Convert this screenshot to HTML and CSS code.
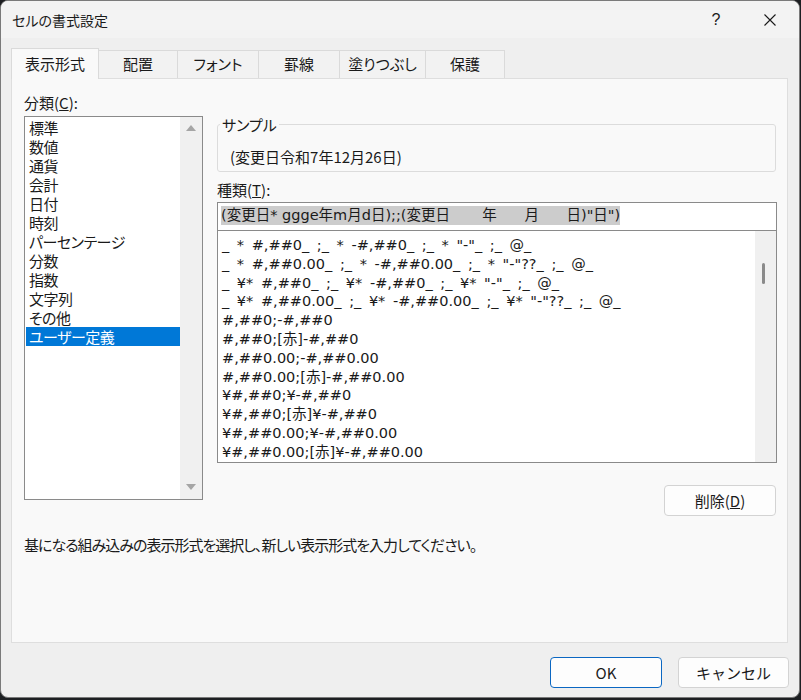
FILE: index.html
```html
<!DOCTYPE html>
<html lang="ja">
<head>
  <meta charset="UTF-8" />
  <title>セルの書式設定</title>
  <link rel="stylesheet" href="styles.css">
</head>
<body>
  <div class="dialog">
    <div class="titlebar">
      <span class="title">セルの書式設定</span>
      <span class="help">?</span>
      <span class="close">
        <svg width="12" height="12" viewBox="0 0 12 12"><path d="M0.5 0.5 L11.5 11.5 M11.5 0.5 L0.5 11.5" stroke="#1a1a1a" stroke-width="1.1" fill="none"/></svg>
      </span>
    </div>

    <div class="tabs">
      <div class="tab active">表示形式</div>
      <div class="tab">配置</div>
      <div class="tab">フォント</div>
      <div class="tab">罫線</div>
      <div class="tab">塗りつぶし</div>
      <div class="tab">保護</div>
    </div>

    <div class="panel">
      <div class="columns">
        <div class="category">
          <div class="label">分類(<u>C</u>):</div>
          <div class="listbox">
            <ul class="items">
              <li>標準</li>
              <li>数値</li>
              <li>通貨</li>
              <li>会計</li>
              <li>日付</li>
              <li>時刻</li>
              <li>パーセンテージ</li>
              <li>分数</li>
              <li>指数</li>
              <li>文字列</li>
              <li>その他</li>
              <li class="selected">ユーザー定義</li>
            </ul>
            <div class="scrollbar">
              <svg width="10" height="6" viewBox="0 0 10 6"><path d="M0 6 L5 0 L10 6 Z" fill="#a5a5a5"/></svg>
              <svg width="10" height="6" viewBox="0 0 10 6"><path d="M0 0 L10 0 L5 6 Z" fill="#a5a5a5"/></svg>
            </div>
          </div>
        </div>

        <div class="format">
          <fieldset class="sample">
            <legend>サンプル</legend>
            <div class="sample-text">(変更日令和7年12月26日)</div>
          </fieldset>

          <div class="label kind">種類(<u>T</u>):</div>
          <div class="code-input"><span class="sel">(変更日* ggge年m月d日);;(変更日       年      月      日)"日")</span></div>

          <div class="code-list">
            <ul class="codes">
              <li>_ * #,##0_ ;_ * -#,##0_ ;_ * "-"_ ;_ @_</li>
              <li>_ * #,##0.00_ ;_ * -#,##0.00_ ;_ * "-"??_ ;_ @_</li>
              <li>_ ¥* #,##0_ ;_ ¥* -#,##0_ ;_ ¥* "-"_ ;_ @_</li>
              <li>_ ¥* #,##0.00_ ;_ ¥* -#,##0.00_ ;_ ¥* "-"??_ ;_ @_</li>
              <li>#,##0;-#,##0</li>
              <li>#,##0;[赤]-#,##0</li>
              <li>#,##0.00;-#,##0.00</li>
              <li>#,##0.00;[赤]-#,##0.00</li>
              <li>¥#,##0;¥-#,##0</li>
              <li>¥#,##0;[赤]¥-#,##0</li>
              <li>¥#,##0.00;¥-#,##0.00</li>
              <li>¥#,##0.00;[赤]¥-#,##0.00</li>
            </ul>
            <div class="thin-scroll"><span class="thumb"></span></div>
          </div>

          <button class="btn delete">削除(<u>D</u>)</button>
        </div>
      </div>

      <p class="hint">基になる組み込みの表示形式を選択し、新しい表示形式を入力してください。</p>
    </div>

    <div class="footer">
      <button class="btn primary">OK</button>
      <button class="btn cancel">キャンセル</button>
    </div>
  </div>
</body>
</html>
```

FILE: styles.css
```css
body {
  margin: 0;
  background: #1d1f22;
  font-family: "Noto Sans CJK JP", "Noto Sans", sans-serif;
  font-feature-settings: "palt";
  font-size: 15px;
  color: #1a1a1a;
}
.dialog {
  width: 800px;
  height: 698px;
  box-sizing: border-box;
  border: 1px solid #7a7a7a;
  border-radius: 8px;
  background: #efefef;
  display: flex;
  flex-direction: column;
  overflow: hidden;
}
.titlebar {
  height: 37px;
  flex: none;
  display: flex;
  align-items: center;
  background: #f3f3f3;
  padding-left: 11px;
}
.title {
  font-size: 14px;
  flex: 1;
}
.help {
  width: 20px;
  text-align: center;
  font-family: "Liberation Sans", sans-serif;
  font-size: 16px;
  margin-right: 38px;
}
.close {
  display: flex;
  width: 12px;
  margin-right: 23px;
}

/* tabs */
.tabs {
  height: 40px;
  flex: none;
  display: flex;
  align-items: flex-end;
  padding-left: 10px;
}
.tab {
  height: 28px;
  box-sizing: border-box;
  border: 1px solid #dadada;
  border-bottom: none;
  margin-right: -1px;
  background: #f2f2f2;
  display: flex;
  align-items: center;
  justify-content: center;
  font-size: 15px;
  padding-bottom: 2px;
}
.tab:nth-child(1) { width: 88px; }
.tab:nth-child(2) { width: 80px; }
.tab:nth-child(3) { width: 82px; }
.tab:nth-child(4) { width: 82px; }
.tab:nth-child(5) { width: 87px; }
.tab:nth-child(6) { width: 80px; }
.tab.active {
  height: 31px;
  margin-bottom: -1px;
  background: #f9f9f9;
  position: relative;
  z-index: 1;
}

/* panel */
.panel {
  height: 565px;
  flex: none;
  box-sizing: border-box;
  margin: 0 11px 0 10px;
  border: 1px solid #dedede;
  background: #f9f9f9;
  padding: 14px 10px 0 12px;
}
.columns {
  display: grid;
  grid-template-columns: 179px 560px;
  column-gap: 14px;
}
.label {
  line-height: 19px;
  height: 19px;
}
.listbox {
  margin-top: 4px;
  height: 384px;
  box-sizing: border-box;
  border: 1px solid #8a8a8a;
  background: #fff;
  display: flex;
}
.items {
  list-style: none;
  margin: 0;
  padding: 1px 0 0 1px;
  flex: 1;
}
.items li {
  height: 19px;
  line-height: 19px;
  padding-left: 3px;
  letter-spacing: -0.5px;
}
.items li.selected {
  background: #0078d7;
  color: #fff;
}
.scrollbar {
  width: 22px;
  flex: none;
  background: #f0f0f0;
  display: flex;
  flex-direction: column;
  justify-content: space-between;
  align-items: center;
  padding: 8px 0 9px;
  box-sizing: border-box;
}

/* right column */
.format {
  display: flex;
  flex-direction: column;
}
.sample {
  margin: 23px 0 0;
  padding: 0 0 5px 2px;
  border: 1px solid #dcdcdc;
  border-radius: 3px;
  width: 559px;
  box-sizing: border-box;
}
.sample legend {
  padding: 0 2px;
  line-height: 17px;
  font-size: 15px;
}
.sample-text {
  margin-top: 14px;
  padding-left: 10px;
  line-height: 19px;
}
.kind {
  margin-top: 8px;
}
.code-input {
  margin-top: 3px;
  height: 29px;
  box-sizing: border-box;
  border: 1px solid #8a8a8a;
  background: #fff;
  padding: 3px 0 0 3px;
  white-space: pre;
  font-family: "DejaVu Sans", "Noto Sans CJK JP", sans-serif;
  font-feature-settings: normal;
  font-size: 14.5px;
}
.sel {
  background: #cccccc;
  line-height: 19px;
  display: inline-block;
}
.code-list {
  margin-top: -1px;
  height: 233px;
  box-sizing: border-box;
  border: 1px solid #8a8a8a;
  background: #fff;
  display: flex;
  overflow: hidden;
}
.codes {
  list-style: none;
  margin: 0;
  padding: 5px 0 0 4px;
  flex: 1;
  font-family: "DejaVu Sans", "Noto Sans CJK JP", sans-serif;
  font-feature-settings: normal;
  font-size: 14.5px;
}
.codes li {
  height: 18.8px;
  line-height: 18.8px;
  white-space: pre;
  word-spacing: 3px;
}
.thin-scroll {
  width: 21px;
  flex: none;
  background: #f0f0f0;
  position: relative;
}
.thumb {
  position: absolute;
  left: 7px;
  top: 32px;
  width: 3px;
  height: 21px;
  border-radius: 2px;
  background: #8a8a8a;
}
.btn {
  font-family: inherit;
  font-size: 15px;
  color: #1a1a1a;
  background: #fdfdfd;
  border: 1px solid #d3d3d3;
  border-radius: 4px;
  height: 31px;
  padding: 0;
}
.delete {
  width: 112px;
  align-self: flex-end;
  margin: 22px 1px 0 0;
}
.hint {
  margin: 19px 0 0;
  line-height: 19px;
  letter-spacing: -1px;
}

/* footer */
.footer {
  flex: 1;
  display: flex;
  justify-content: flex-end;
  align-items: flex-start;
  gap: 16px;
  padding: 14px 10px 0 0;
}
.primary {
  width: 112px;
  border-color: #0b67c2;
}
.cancel {
  width: 111px;
}
```
